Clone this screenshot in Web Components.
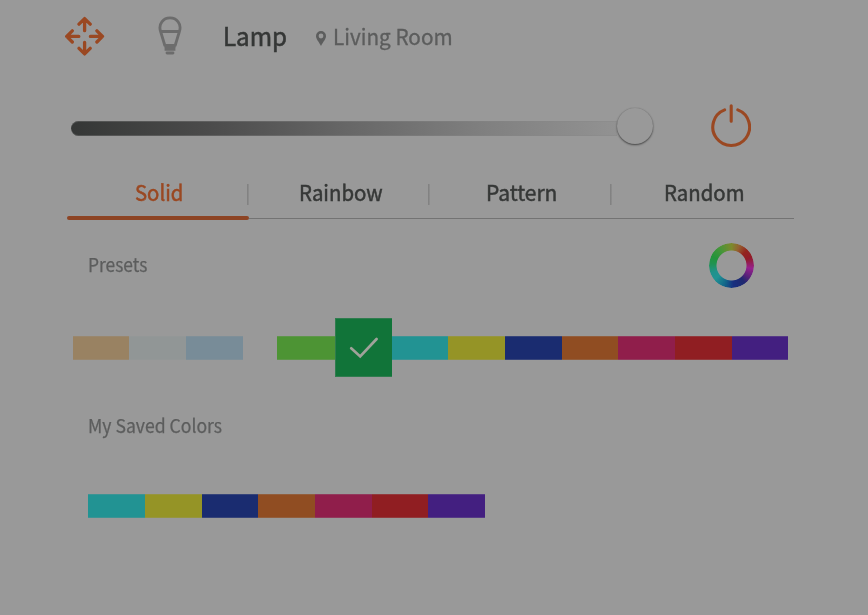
<!DOCTYPE html>
<html lang="en">
<head>
<meta charset="utf-8">
<title>Lamp</title>
<style>
html,body{margin:0;height:100%;background:#999;overflow:hidden}
body{font-family:"Noto Sans CJK JP","Noto Sans",sans-serif;color:#363837}
</style>
</head>
<body>
<lamp-panel></lamp-panel>
<script>
const define = (name, html, setup) => customElements.define(name, class extends HTMLElement {
  constructor() {
    super();
    this.attachShadow({mode: 'open'}).innerHTML = html;
  }
  connectedCallback() { if (setup) setup(this, this.shadowRoot); }
});

// A text label fitted to a fixed width by scaling its glyphs evenly.
define('fit-text', `<style>
:host{display:block;width:var(--w);white-space:nowrap;line-height:30px}
span{display:inline-block;transform-origin:0 50%;-webkit-text-stroke:var(--weight,.25px) currentColor}
</style><span><slot></slot></span>`, (el, root) => {
  el.style.setProperty('--w', el.getAttribute('w') + 'px');
  const span = root.querySelector('span');
  span.style.transform = `scaleX(${el.getAttribute('w') / span.offsetWidth})`;
});

define('move-icon', `<style>:host{display:block;width:40px;height:40px}svg{display:block}</style>
<svg width="40" height="40" viewBox="0 0 40 40" fill="none" stroke="#9a4822" stroke-width="3.3" stroke-linecap="round" stroke-linejoin="round">
<path d="M19.6 14.7V2.9M14 8.2L19.6 2.6L25.2 8.2M19.6 26.3V37.6M14 32.3L19.6 37.9L25.2 32.3M13.8 20.4H2M7.3 14.8L1.7 20.4L7.3 26M25.4 20.4H37.2M31.9 14.8L37.5 20.4L31.9 26"/></svg>`);

define('bulb-icon', `<style>:host{display:block;width:24px;height:40px}svg{display:block}</style>
<svg width="24" height="40" viewBox="0 0 24 40" fill="none" stroke="#6c6c6c" stroke-width="2.8">
<path d="M7 30L2.6 15.5C0 7.8 5.4 1.9 12 1.9S24 7.8 21.4 15.5L17 30M2.6 15.5H21.4"/>
<path d="M5.6 28H18.4L17.4 32V34.8H6.6V32Z" fill="#6c6c6c" stroke="none"/>
<path d="M9 37H15" stroke-linecap="round"/></svg>`);

define('pin-icon', `<style>:host{display:block;width:10px;height:15px}svg{display:block}</style>
<svg width="10" height="15" viewBox="0 0 10 15"><path fill="#5c5d5d" fill-rule="evenodd" d="M5 0A5 5 0 0 0 0 5C0 8 3 11 5 15C7 11 10 8 10 5A5 5 0 0 0 5 0ZM5 2.6A2.4 2.4 0 1 1 5 7.4A2.4 2.4 0 1 1 5 2.6Z"/></svg>`);

define('power-icon', `<style>:host{display:block;width:40px;height:44px}svg{display:block}</style>
<svg width="40" height="44" viewBox="0 0 40 44" fill="none" stroke="#9a4822" stroke-width="3.1" stroke-linecap="round">
<path d="M13.6 5.9A18.4 18.4 0 1 0 26.8 5.9M20.2 1.8V17.3"/></svg>`);

define('lamp-header', `<style>
:host{display:flex;height:75px;padding-left:65px;align-items:flex-start}
move-icon{margin-top:16px}bulb-icon{margin:16px 0 0 53px}
.name{margin:19.5px 0 0 41px;font-size:25.5px;--weight:.6px;color:#353736}
pin-icon{margin:31px 0 0 29px}
.room{margin:21px 0 0 7px;font-size:21.5px;--weight:.3px;color:#5c5d5d}
</style><move-icon></move-icon><bulb-icon></bulb-icon>
<fit-text class="name" w="64.4">Lamp</fit-text><pin-icon></pin-icon>
<fit-text class="room" w="119.5">Living Room</fit-text>`);

define('brightness-slider', `<style>
:host{display:flex;width:583px;height:39px;align-items:center}
.track{width:546px;height:15px;border-radius:8px 0 0 8px;background:linear-gradient(90deg,#353736,#4b4b4b 25%,#666 50%,#808080 76%,#929292);box-shadow:inset 0 1px #88888855,inset 0 -1px #88888855;margin-top:3px}
.knob{width:36px;height:36px;margin-top:-2px;border-radius:50%;background:#999;box-shadow:0 1px 2px #444,0 0 1px #777}
</style><div class="track"></div><div class="knob"></div>`);

define('control-row', `<style>
:host{display:flex;height:100px;padding-left:71px;align-items:flex-start}
brightness-slider{margin-top:32px}power-icon{margin:29px 0 0 57px}
</style><brightness-slider></brightness-slider><power-icon></power-icon>`);

define('mode-tab', `<style>
:host{display:flex;box-sizing:border-box;height:44px;justify-content:center;padding:1px 0 0 2px;border-bottom:1px solid #737373;background:linear-gradient(#828282,#828282) right 9px/1.6px 21px no-repeat;font-size:22px;--weight:.5px;color:#363837}
:host([last]){background:none}
:host([active]){color:#9a4822;border-color:#999;padding-left:1px}
</style><slot></slot>`);

define('mode-tabs', `<style>
:host{display:grid;grid-template-columns:182px 181px 181.5px 182.5px;width:727px;margin-left:67px;height:46px}
.bar{grid-column:1;grid-row:1;align-self:end;height:4px;border-radius:2px;background:#8d4424;margin-bottom:.6px;z-index:1}
mode-tab{grid-row:1}
mode-tab:nth-of-type(1){grid-column:1}
mode-tab:nth-of-type(2){grid-column:2}
mode-tab:nth-of-type(3){grid-column:3}
mode-tab:nth-of-type(4){grid-column:4}
</style><mode-tab active><fit-text w="48">Solid</fit-text></mode-tab>
<mode-tab><fit-text w="83.5">Rainbow</fit-text></mode-tab>
<mode-tab><fit-text w="71.5">Pattern</fit-text></mode-tab>
<mode-tab last><fit-text w="80.5">Random</fit-text></mode-tab><div class="bar"></div>`);

define('color-wheel', `<style>
:host{display:block;width:45px;height:45px;border-radius:50%;
background:conic-gradient(#7c8a2b,#946030 22deg,#93251e 45deg,#911c29 68deg,#97208d 98deg,#562178 125deg,#20286f 142deg,#173080 175deg,#12678a 200deg,#219393 230deg,#21928c 250deg,#209352 275deg,#23943a 295deg,#45953a 325deg,#7c8a2b);
-webkit-mask:radial-gradient(circle,transparent 14.6px,#000 15.4px)}
</style>`);

define('section-title', `<style>
:host{display:flex;font-size:18.8px;color:#5c5d5d;padding-left:87.5px}
</style><slot></slot>`);

define('color-swatch', `<style>
:host{display:flex;box-sizing:border-box;height:24px;background:var(--c);border:solid #99999938;border-width:1px 0}
:host([selected]){height:59px;margin:-18px 0;width:57px;border-left-width:1px;z-index:1;justify-content:center;align-items:center}
svg{display:none}:host([selected]) svg{display:block}
</style><svg width="30" height="24" viewBox="0 0 30 24" fill="none" stroke="#a0a29a" stroke-width="2.7" stroke-linecap="round"><path d="M2.2 12.3L11.2 20.4L27.6 3"/></svg>`,
  el => el.style.setProperty('--c', el.getAttribute('color')));

define('color-row', `<style>
:host{display:grid;grid-auto-flow:column;grid-template-columns:var(--first,56.7px);grid-auto-columns:56.7px;height:24px}
</style><slot></slot>`, el => {
  const picked = el.getAttribute('selected');
  el.innerHTML = el.getAttribute('colors').split(' ').map((c, i) =>
    `<color-swatch color="${c}"${String(i) === picked ? ' selected' : ''}></color-swatch>`).join('');
});

define('lamp-panel', `<style>
:host{display:flex;flex-direction:column;width:868px;height:615px;background:#999}
.presets{display:flex;height:113px;justify-content:space-between;box-sizing:border-box}
.presets section-title{margin-top:28px}
color-wheel{margin:22px 114px 0 0}
.rows{display:flex;padding:0 0 0 72.5px;gap:34.3px;margin-top:2px}
[selected]{--first:58.1px}
.saved{margin-top:50px}
.savedrow{margin:54px 0 0 88.2px}
</style>
<lamp-header></lamp-header><control-row></control-row><mode-tabs></mode-tabs>
<div class="presets"><section-title><fit-text w="59.3">Presets</fit-text></section-title><color-wheel></color-wheel></div>
<div class="rows"><color-row colors="#998262 #919696 #788c98"></color-row>
<color-row selected="1" colors="#4d9434 #117439 #229393 #959426 #1a2c70 #904d22 #901e4b #901e22 #431f80"></color-row></div>
<section-title class="saved"><fit-text w="134">My Saved Colors</fit-text></section-title>
<color-row class="savedrow" colors="#229393 #959426 #1a2c70 #904d22 #901e4b #901e22 #431f80"></color-row>`);
</script>
</body>
</html>
